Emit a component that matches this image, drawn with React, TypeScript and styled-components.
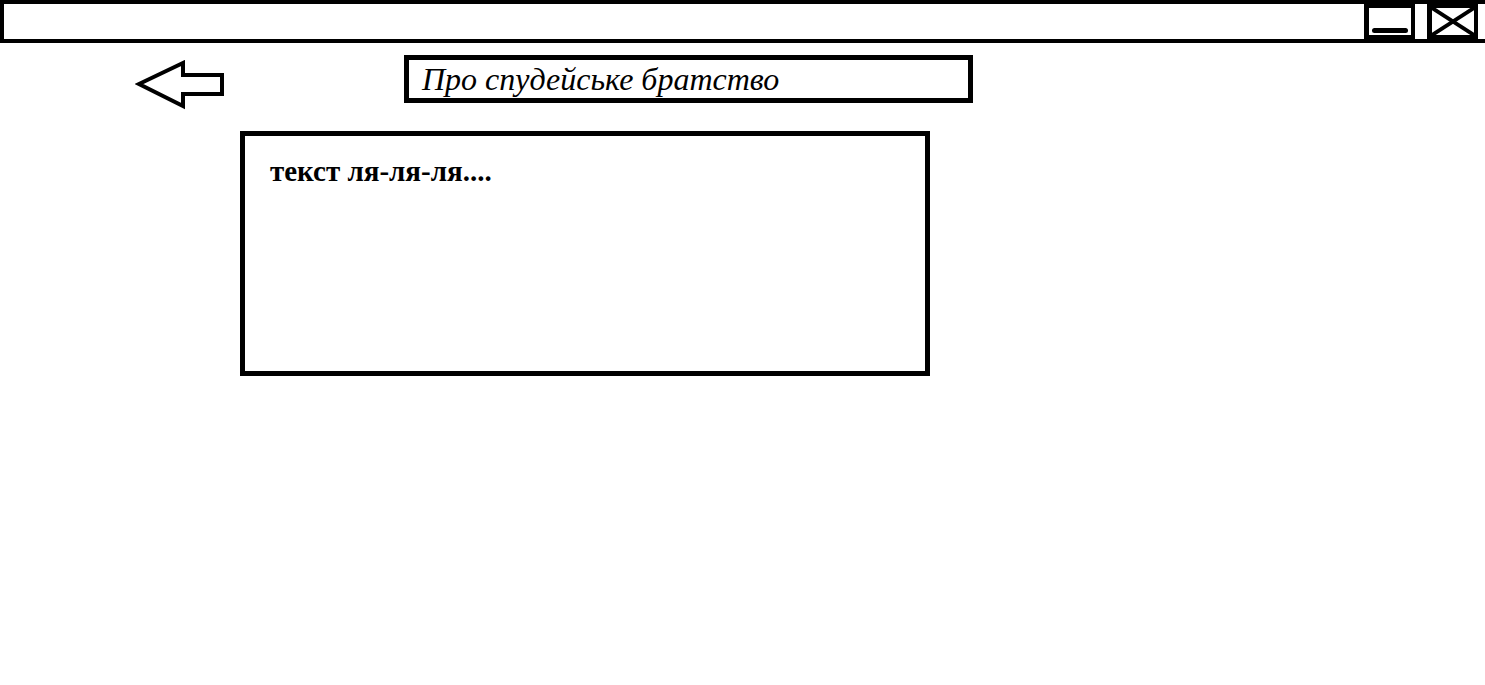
import React from "react";
import styled, { createGlobalStyle } from "styled-components";

const GlobalStyle = createGlobalStyle`
  html, body {
    margin: 0;
    padding: 0;
    background: #fff;
    overflow: hidden;
  }
  * {
    box-sizing: border-box;
  }
`;

export default function App() {
  return (
    <>
      <GlobalStyle />
      <Page>
        <TitleBar>
          <Controls>
            <ControlButton aria-label="minimize">
              <MinimizeBar />
            </ControlButton>
            <ControlButton aria-label="close">
              <svg width="100%" height="100%" viewBox="0 0 43 27" preserveAspectRatio="none">
                <line x1="0" y1="0" x2="43" y2="27" stroke="#000" strokeWidth="4" />
                <line x1="43" y1="0" x2="0" y2="27" stroke="#000" strokeWidth="4" />
              </svg>
            </ControlButton>
          </Controls>
        </TitleBar>

        <Header>
          <BackArrow width="92" height="50" viewBox="0 0 92 50">
            <polygon
              points="4,24 48,3 48,15 87,15 87,34 48,34 48,46"
              fill="#fff"
              stroke="#000"
              strokeWidth="4"
              strokeLinejoin="miter"
            />
          </BackArrow>
          <PageTitle>Про спудейське братство</PageTitle>
        </Header>

        <ContentBox>
          <ContentText>текст ля-ля-ля....</ContentText>
        </ContentBox>
      </Page>
    </>
  );
}

const Page = styled.div`
  width: 1485px;
  height: 685px;
  display: flex;
  flex-direction: column;
  background: #fff;
`;

const TitleBar = styled.div`
  width: 1495px;
  height: 43px;
  border: 4px solid #000;
  display: flex;
  justify-content: flex-end;
`;

const Controls = styled.div`
  display: flex;
  gap: 12px;
  padding-right: 13px;
`;

const ControlButton = styled.div`
  width: 51px;
  height: 35px;
  border: 4px solid #000;
  border-left-width: 5px;
  display: flex;
  flex-direction: column;
  justify-content: flex-end;
  align-items: center;
  padding-bottom: 2px;

  & + & {
    padding: 0;
  }
`;

const MinimizeBar = styled.div`
  width: 36px;
  height: 5px;
  border-radius: 3px;
  background: #000;
`;

const Header = styled.div`
  display: flex;
  align-items: flex-start;
  height: 48px;
  padding-left: 135px;
  margin-top: 12px;
`;

const BackArrow = styled.svg`
  margin-top: 5px;
  flex-shrink: 0;
`;

const PageTitle = styled.div`
  margin-left: 177px;
  width: 569px;
  height: 48px;
  border: 5px solid #000;
  display: flex;
  align-items: center;
  padding-left: 13px;
  font-family: "Liberation Serif", "Times New Roman", serif;
  font-style: italic;
  font-size: 32px;
  line-height: 32px;
  color: #000;
`;

const ContentBox = styled.div`
  margin-left: 240px;
  margin-top: 28px;
  width: 690px;
  height: 245px;
  border: 5px solid #000;
  padding: 21px 25px;
`;

const ContentText = styled.div`
  font-family: "Liberation Serif", "Times New Roman", serif;
  font-weight: bold;
  font-size: 29px;
  line-height: 28px;
  color: #000;
`;
